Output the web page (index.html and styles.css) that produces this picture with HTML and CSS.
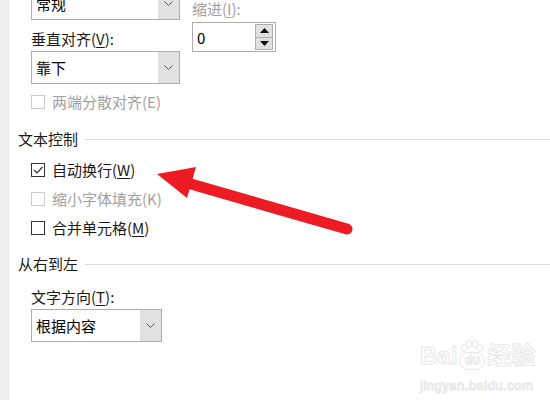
FILE: index.html
```html
<!DOCTYPE html>
<html lang="zh-CN">
<head>
  <meta charset="UTF-8" />
  <title>设置单元格格式 - 对齐</title>
  <link rel="stylesheet" href="styles.css">
</head>
<body>
  <div class="page">
    <div class="rail"></div>

    <div class="content">
      <div class="align-row">
        <div class="col-left">
          <div class="combo">
            <span class="combo-value">常规</span>
            <span class="combo-btn"><svg width="9" height="5" viewBox="0 0 9 5"><polyline points="0.5,0.5 4.5,4.5 8.5,0.5" fill="none" stroke="#555" stroke-width="1"/></svg></span>
          </div>
          <div class="field-label">垂直对齐(<u>V</u>):</div>
          <div class="combo">
            <span class="combo-value">靠下</span>
            <span class="combo-btn"><svg width="9" height="5" viewBox="0 0 9 5"><polyline points="0.5,0.5 4.5,4.5 8.5,0.5" fill="none" stroke="#555" stroke-width="1"/></svg></span>
          </div>
        </div>

        <div class="col-right">
          <div class="field-label disabled">缩进(<u>I</u>):</div>
          <div class="spin">
            <span class="spin-value">0</span>
            <span class="spin-btns">
              <span class="spin-btn"><svg width="9" height="5" viewBox="0 0 9 5"><polygon points="0,5 4.5,0 9,5" fill="#111"/></svg></span>
              <span class="spin-btn"><svg width="9" height="5" viewBox="0 0 9 5"><polygon points="0,0 9,0 4.5,5" fill="#111"/></svg></span>
            </span>
          </div>
        </div>
      </div>

      <div class="indent">
        <label class="check disabled first">
          <span class="box"></span>
          <span>两端分散对齐(E)</span>
        </label>
      </div>

      <div class="section-title">文本控制</div>
      <div class="indent checks">
        <label class="check">
          <span class="box"><svg width="12" height="12" viewBox="0 0 12 12"><polyline points="2,6 5,9 10.5,3" fill="none" stroke="#333" stroke-width="1.2"/></svg></span>
          <span>自动换行(<u>W</u>)</span>
        </label>
        <label class="check disabled">
          <span class="box"></span>
          <span>缩小字体填充(K)</span>
        </label>
        <label class="check">
          <span class="box"></span>
          <span>合并单元格(<u>M</u>)</span>
        </label>
      </div>

      <div class="section-title rtl">从右到左</div>
      <div class="indent">
        <div class="field-label dir-label">文字方向(<u>T</u>):</div>
        <div class="combo narrow">
          <span class="combo-value">根据内容</span>
          <span class="combo-btn"><svg width="9" height="5" viewBox="0 0 9 5"><polyline points="0.5,0.5 4.5,4.5 8.5,0.5" fill="none" stroke="#555" stroke-width="1"/></svg></span>
        </div>
      </div>
    </div>

    <!-- annotation arrow drawn over the dialog -->
    <svg class="arrow" width="550" height="400" viewBox="0 0 550 400">
      <line x1="184" y1="182" x2="347" y2="229" stroke="#ed1c24" stroke-width="11" stroke-linecap="round"/>
      <polygon points="157,174 196,167 187,198" fill="#ed1c24"/>
    </svg>

    <div class="watermark">
      <div class="wm-logo">
        <span>Bai</span>
        <span class="wm-paw">
          <svg width="26" height="12" viewBox="0 0 26 12">
            <ellipse cx="5" cy="8" rx="3" ry="3.5" fill="none" stroke="#e6e6e6"/>
            <ellipse cx="10" cy="4" rx="3" ry="3.5" fill="none" stroke="#e6e6e6"/>
            <ellipse cx="16" cy="4" rx="3" ry="3.5" fill="none" stroke="#e6e6e6"/>
            <ellipse cx="21" cy="8" rx="3" ry="3.5" fill="none" stroke="#e6e6e6"/>
          </svg>
          <span class="wm-du">du</span>
        </span>
        <span>经验</span>
      </div>
      <div class="wm-url">jingyan.baidu.com</div>
    </div>
  </div>
</body>
</html>
```

FILE: styles.css
```css
* {
  margin: 0;
  padding: 0;
  box-sizing: border-box;
}

body {
  width: 550px;
  height: 400px;
  overflow: hidden;
  background: #fff;
  font-family: "Noto Sans CJK SC", "Microsoft YaHei", sans-serif;
  font-size: 15px;
  line-height: 20px;
  color: #1a1a1a;
}

u {
  text-decoration: underline;
  text-underline-offset: 2px;
}

.page {
  position: relative;
  display: flex;
  height: 400px;
}

.rail {
  width: 9px;
  background: #f0f0f0;
  border-right: 1px solid #e6e6e6;
}

.content {
  flex: 1;
  padding-left: 9px;
}

.disabled {
  color: #a0a0a0;
}

/* top area: alignment combos and indent spinner */
.align-row {
  display: flex;
  gap: 12px;
  margin-top: -13px;
  padding-left: 13px;
}

.col-left {
  width: 149px;
}

.col-right {
  padding-top: 12px;
}

.field-label {
  height: 20px;
  margin: 9px 0 2px;
}

.col-right .field-label {
  margin: 0 0 3px;
}

.combo {
  display: flex;
  height: 33px;
  border: 1px solid #adadad;
  background: #fff;
}

.combo.narrow {
  width: 131px;
}

.combo-value {
  flex: 1;
  padding-left: 4px;
  line-height: 31px;
  color: #000;
}

.combo-btn {
  width: 21px;
  display: flex;
  align-items: center;
  justify-content: center;
  background: #e1e1e1;
}

.spin {
  display: flex;
  width: 84px;
  height: 30px;
  border: 1px solid #adadad;
  padding: 1px 2px 1px 0;
}

.spin-value {
  flex: 1;
  padding-left: 4px;
  line-height: 27px;
  color: #000;
}

.spin-btns {
  display: flex;
  flex-direction: column;
  width: 18px;
}

.spin-btn {
  flex: 1;
  display: flex;
  align-items: center;
  justify-content: center;
  background: #e1e1e1;
  border: 1px solid #adadad;
}

.spin-btn + .spin-btn {
  border-top: none;
}

/* checkboxes */
.indent {
  padding-left: 13px;
}

.check {
  display: flex;
  align-items: center;
  gap: 7px;
  height: 20px;
}

.check.first {
  margin-top: 8px;
}

.checks {
  display: flex;
  flex-direction: column;
  gap: 9px;
  margin-top: 11px;
}

.box {
  width: 14px;
  height: 14px;
  border: 1px solid #333;
  display: flex;
  align-items: center;
  justify-content: center;
  background: #fff;
}

.check.disabled .box {
  border-color: #cccccc;
}

/* group headers */
.section-title {
  display: flex;
  align-items: center;
  gap: 7px;
  height: 20px;
  margin-top: 17px;
  color: #1a1a1a;
}

.section-title::after {
  content: "";
  flex: 1;
  height: 1px;
  background: #dcdcdc;
}

.section-title.rtl {
  margin-top: 16px;
}

.dir-label {
  margin: 13px 0 2px;
}

/* overlays */
.arrow {
  position: absolute;
  left: 0;
  top: 0;
}

.watermark {
  position: absolute;
  left: 420px;
  top: 340px;
  color: transparent;
  -webkit-text-stroke: 1px #e8e8e8;
  font-family: "Liberation Sans", "Noto Sans CJK SC", sans-serif;
}

.wm-logo {
  display: flex;
  align-items: flex-end;
  font-size: 24px;
  font-weight: bold;
  line-height: 28px;
}

.wm-paw {
  display: flex;
  flex-direction: column;
  align-items: center;
  margin: 0 2px;
}

.wm-du {
  width: 26px;
  height: 18px;
  border: 1px solid #e6e6e6;
  border-radius: 10px;
  font-size: 12px;
  line-height: 15px;
  text-align: center;
}

.wm-url {
  font-size: 13px;
  line-height: 16px;
  margin-top: 8px;
  letter-spacing: 0.5px;
}
```
